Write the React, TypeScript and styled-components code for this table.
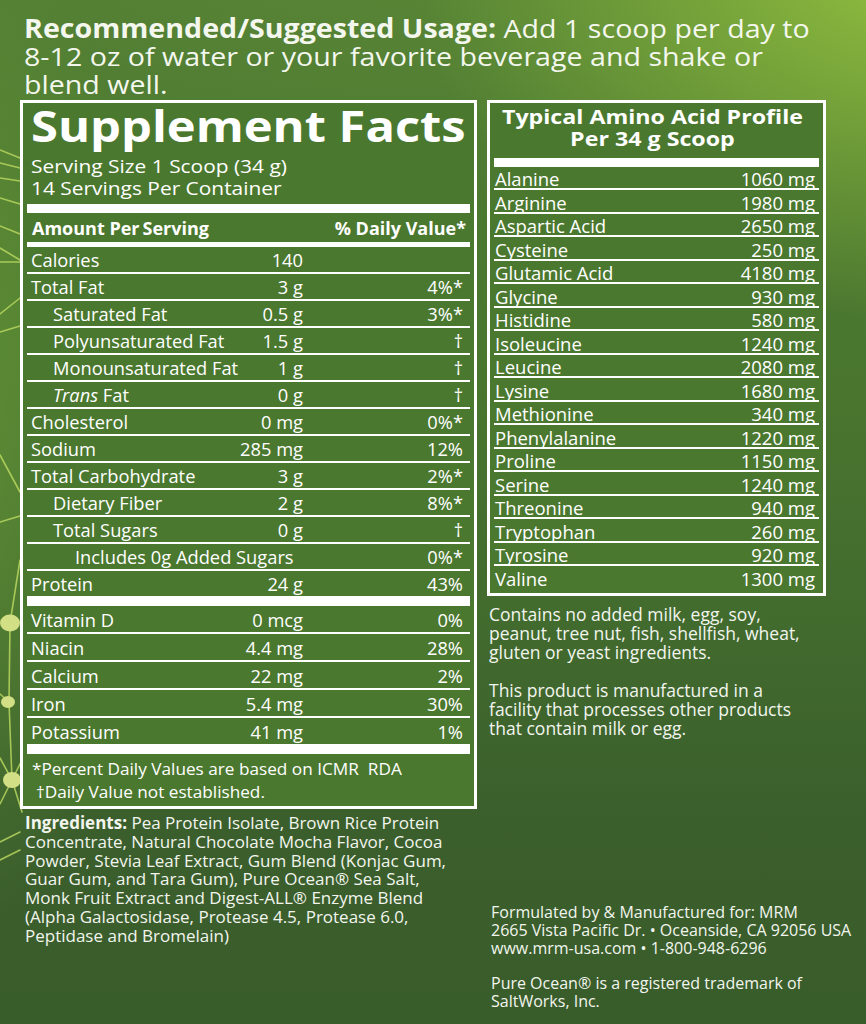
import React from "react";
import styled, { createGlobalStyle } from "styled-components";

const GlobalStyle = createGlobalStyle`
  html, body { margin: 0; padding: 0; background: #3a5d2b; }
  #root { width: 866px; }
`;

const Page = styled.div`
  position: relative;
  width: 866px;
  height: 1024px;
  overflow: hidden;
  color: #ffffff;
  font-family: "Open Sans", "Liberation Sans", sans-serif;
  background:
    radial-gradient(ellipse 520px 360px at 930px -40px, rgba(150, 196, 64, 0.95), rgba(150, 196, 64, 0) 100%),
    radial-gradient(ellipse 220px 520px at -60px 420px, rgba(115, 165, 60, 0.55), rgba(115, 165, 60, 0) 100%),
    radial-gradient(ellipse 700px 260px at 420px -40px, rgba(95, 140, 55, 0.6), rgba(95, 140, 55, 0) 100%),
    linear-gradient(180deg, #4e7b32 0%, #4a772f 35%, #426b2e 60%, #3b5f2c 80%, #395c2b 100%);
`;

const Decor = styled.svg`
  position: absolute;
  left: 0;
  top: 0;
  width: 866px;
  height: 1024px;
  pointer-events: none;
`;

const Content = styled.div`
  position: relative;
  height: 100%;
  box-sizing: border-box;
  display: flex;
  flex-direction: column;
  padding: 14px 0 13px 0;
`;

const Usage = styled.p`
  margin: 0 0 0 24px;
  font-size: 26px;
  line-height: 28px;
  white-space: nowrap;
  color: #f4f7ee;
  transform: scaleX(1.1);
  transform-origin: 0 0;
  b { font-weight: 700; }
`;

const Columns = styled.div`
  flex: 1;
  display: grid;
  grid-template-columns: 457px 339px;
  column-gap: 10px;
  margin: 2px 0 0 20px;
`;

const LeftCol = styled.div`
  display: flex;
  flex-direction: column;
`;

const RightCol = styled.div`
  display: flex;
  flex-direction: column;
`;

const Panel = styled.section`
  border: 3px solid #ffffff;
  background: #4b782f;
  padding: 0 4px;
`;

const FactsTitle = styled.h1`
  margin: 1.7px 0 0 4px;
  font-size: 42.5px;
  line-height: 42px;
  font-weight: 700;
  white-space: nowrap;
  transform: scaleX(1.15);
  transform-origin: 0 0;
`;

const Serving = styled.div`
  margin: 8px 0 0 4px;
  font-size: 19px;
  line-height: 22px;
  white-space: nowrap;
  transform: scaleX(1.1);
  transform-origin: 0 0;
`;

const Bar = styled.div<{ $h: number; $mt?: number }>`
  height: ${(p) => p.$h}px;
  margin-top: ${(p) => p.$mt ?? 0}px;
  background: #ffffff;
`;

const HeadRow = styled.div`
  display: flex;
  justify-content: space-between;
  align-items: center;
  height: 29px;
  padding: 0 4px 0 5px;
  font-size: 18px;
  font-weight: 700;
  white-space: nowrap;
`;

const Tight = styled.span`
  margin-left: 3px;
`;

const FactRow = styled.div<{ $indent?: number; $last?: boolean; $h?: number }>`
  display: grid;
  grid-template-columns: minmax(0, 1fr) 120px 160px;
  align-items: center;
  height: ${(p) => p.$h ?? 25}px;
  padding: 0 7px 0 ${(p) => 4 + (p.$indent ?? 0) * 22}px;
  border-bottom: ${(p) => (p.$last ? "none" : "2px solid #ffffff")};
  font-size: 18.3px;
  white-space: nowrap;
`;

const Cell = styled.span<{ $right?: boolean }>`
  text-align: ${(p) => (p.$right ? "right" : "left")};
  i { font-style: italic; }
`;

const Footnotes = styled.div`
  padding: 3px 0 3px 5px;
  font-size: 17.2px;
  line-height: 23px;
  white-space: nowrap;
  div + div { padding-left: 4px; }
`;

const Ingredients = styled.p`
  margin: 5px 0 0 5px;
  font-size: 17px;
  line-height: 18.7px;
  white-space: nowrap;
  color: #f2f5ee;
  b { font-weight: 700; }
`;

const AminoTitle = styled.h2`
  margin: 0;
  padding: 3.2px 7px 0 0;
  text-align: center;
  font-size: 20px;
  line-height: 22px;
  font-weight: 700;
  white-space: nowrap;
  transform: scaleX(1.16);
  transform-origin: 50% 0;
`;

const AminoRow = styled.div<{ $last?: boolean }>`
  display: flex;
  justify-content: space-between;
  align-items: flex-end;
  height: 21.5px;
  padding: 0 4px 0 1px;
  font-size: 18.5px;
  line-height: 19px;
  white-space: nowrap;
  border-bottom: ${(p) => (p.$last ? "none" : "2px solid #ffffff")};
`;

const AminoList = styled.div`
  padding-bottom: 5px;
`;

const Note = styled.p`
  margin: 9px 0 0 2px;
  font-size: 17.5px;
  line-height: 19px;
  white-space: nowrap;
  color: #f2f5ee;
  & + & { margin-top: 19px; }
`;

const Address = styled.div`
  margin: auto 0 0 4px;
  font-size: 16px;
  line-height: 17.8px;
  white-space: nowrap;
  color: #f2f5ee;
  p { margin: 0; }
  p + p { margin-top: 17.8px; }
`;

type Fact = { label: React.ReactNode; amount?: string; dv?: string; indent?: number };

const group1: Fact[] = [
  { label: "Calories", amount: "140" },
  { label: "Total Fat", amount: "3 g", dv: "4%*" },
  { label: "Saturated Fat", amount: "0.5 g", dv: "3%*", indent: 1 },
  { label: "Polyunsaturated Fat", amount: "1.5 g", dv: "†", indent: 1 },
  { label: "Monounsaturated Fat", amount: "1 g", dv: "†", indent: 1 },
  { label: <><i>Trans</i> Fat</>, amount: "0 g", dv: "†", indent: 1 },
  { label: "Cholesterol", amount: "0 mg", dv: "0%*" },
  { label: "Sodium", amount: "285 mg", dv: "12%" },
  { label: "Total Carbohydrate", amount: "3 g", dv: "2%*" },
  { label: "Dietary Fiber", amount: "2 g", dv: "8%*", indent: 1 },
  { label: "Total Sugars", amount: "0 g", dv: "†", indent: 1 },
  { label: "Includes 0g Added Sugars", amount: "", dv: "0%*", indent: 2 },
  { label: "Protein", amount: "24 g", dv: "43%" },
];

const group2: Fact[] = [
  { label: "Vitamin D", amount: "0 mcg", dv: "0%" },
  { label: "Niacin", amount: "4.4 mg", dv: "28%" },
  { label: "Calcium", amount: "22 mg", dv: "2%" },
  { label: "Iron", amount: "5.4 mg", dv: "30%" },
  { label: "Potassium", amount: "41 mg", dv: "1%" },
];

const amino: [string, string][] = [
  ["Alanine", "1060 mg"],
  ["Arginine", "1980 mg"],
  ["Aspartic Acid", "2650 mg"],
  ["Cysteine", "250 mg"],
  ["Glutamic Acid", "4180 mg"],
  ["Glycine", "930 mg"],
  ["Histidine", "580 mg"],
  ["Isoleucine", "1240 mg"],
  ["Leucine", "2080 mg"],
  ["Lysine", "1680 mg"],
  ["Methionine", "340 mg"],
  ["Phenylalanine", "1220 mg"],
  ["Proline", "1150 mg"],
  ["Serine", "1240 mg"],
  ["Threonine", "940 mg"],
  ["Tryptophan", "260 mg"],
  ["Tyrosine", "920 mg"],
  ["Valine", "1300 mg"],
];

const glowLines: [number, number, number, number][] = [
  [0, 150, 20, 158],
  [0, 163, 20, 168],
  [0, 178, 20, 181],
  [0, 198, 20, 204],
  [0, 226, 20, 234],
  [0, 248, 20, 260],
  [0, 262, 20, 262],
  [0, 314, 20, 298],
  [0, 332, 20, 326],
  [0, 455, 20, 492],
  [0, 522, 20, 516],
  [20, 560, 10, 623],
  [10, 623, 9, 702],
  [9, 702, 12, 780],
  [12, 780, 0, 758],
  [12, 780, 0, 804],
  [12, 780, 22, 812],
  [12, 780, 22, 760],
  [9, 702, 0, 694],
  [0, 842, 20, 832],
  [0, 860, 20, 850],
];

function Decoration() {
  return (
    <Decor viewBox="0 0 866 1024" aria-hidden="true">
      <g stroke="#bfdc62" strokeWidth="1.6" strokeLinecap="round" opacity="0.8">
        {glowLines.map(([x1, y1, x2, y2], i) => (
          <line key={i} x1={x1} y1={y1} x2={x2} y2={y2} />
        ))}
      </g>
      <g fill="#d2df84">
        <ellipse cx="10" cy="623" rx="10" ry="8.5" />
        <ellipse cx="8" cy="702" rx="7" ry="6" />
        <ellipse cx="12" cy="780" rx="9" ry="8" />
      </g>
    </Decor>
  );
}

function FactGroup({ rows, h }: { rows: Fact[]; h?: number }) {
  return (
    <>
      {rows.map((r, i) => (
        <FactRow key={i} $indent={r.indent} $last={i === rows.length - 1} $h={h}>
          <Cell>{r.label}</Cell>
          <Cell $right>{r.amount}</Cell>
          <Cell $right>{r.dv}</Cell>
        </FactRow>
      ))}
    </>
  );
}

export default function App() {
  return (
    <>
      <GlobalStyle />
      <Page>
        <Decoration />
        <Content>
          <Usage>
            <b>Recommended/Suggested Usage:</b> Add 1 scoop per day to
            <br />
            8-12 oz of water or your favorite beverage and shake or
            <br />
            blend well.
          </Usage>
          <Columns>
            <LeftCol>
              <Panel>
                <FactsTitle>Supplement Facts</FactsTitle>
                <Serving>
                  Serving Size 1 Scoop (34 g)
                  <br />
                  14 Servings Per Container
                </Serving>
                <Bar $h={9} $mt={5.6} />
                <HeadRow>
                  <span>
                    Amount Per<Tight>Serving</Tight>
                  </span>
                  <span>% Daily Value*</span>
                </HeadRow>
                <Bar $h={5} />
                <FactGroup rows={group1} />
                <Bar $h={10} />
                <FactGroup rows={group2} h={26} />
                <Bar $h={10} />
                <Footnotes>
                  <div>*Percent Daily Values are based on ICMR&nbsp; RDA</div>
                  <div>†Daily Value not established.</div>
                </Footnotes>
              </Panel>
              <Ingredients>
                <b>Ingredients:</b> Pea Protein Isolate, Brown Rice Protein
                <br />
                Concentrate, Natural Chocolate Mocha Flavor, Cocoa
                <br />
                Powder, Stevia Leaf Extract, Gum Blend (Konjac Gum,
                <br />
                Guar Gum, and Tara Gum), Pure Ocean® Sea Salt,
                <br />
                Monk Fruit Extract and Digest-ALL® Enzyme Blend
                <br />
                (Alpha Galactosidase, Protease 4.5, Protease 6.0,
                <br />
                Peptidase and Bromelain)
              </Ingredients>
            </LeftCol>
            <RightCol>
              <Panel>
                <AminoTitle>
                  Typical Amino Acid Profile
                  <br />
                  Per 34 g Scoop
                </AminoTitle>
                <Bar $h={9} $mt={7.4} />
                <AminoList>
                  {amino.map(([name, val], i) => (
                    <AminoRow key={name} $last={i === amino.length - 1}>
                      <span>{name}</span>
                      <span>{val}</span>
                    </AminoRow>
                  ))}
                </AminoList>
              </Panel>
              <Note>
                Contains no added milk, egg, soy,
                <br />
                peanut, tree nut, fish, shellfish, wheat,
                <br />
                gluten or yeast ingredients.
              </Note>
              <Note>
                This product is manufactured in a
                <br />
                facility that processes other products
                <br />
                that contain milk or egg.
              </Note>
              <Address>
                <p>
                  Formulated by &amp; Manufactured for: MRM
                  <br />
                  2665 Vista Pacific Dr. • Oceanside, CA 92056 USA
                  <br />
                  www.mrm-usa.com • 1-800-948-6296
                </p>
                <p>
                  Pure Ocean® is a registered trademark of
                  <br />
                  SaltWorks, Inc.
                </p>
              </Address>
            </RightCol>
          </Columns>
        </Content>
      </Page>
    </>
  );
}
